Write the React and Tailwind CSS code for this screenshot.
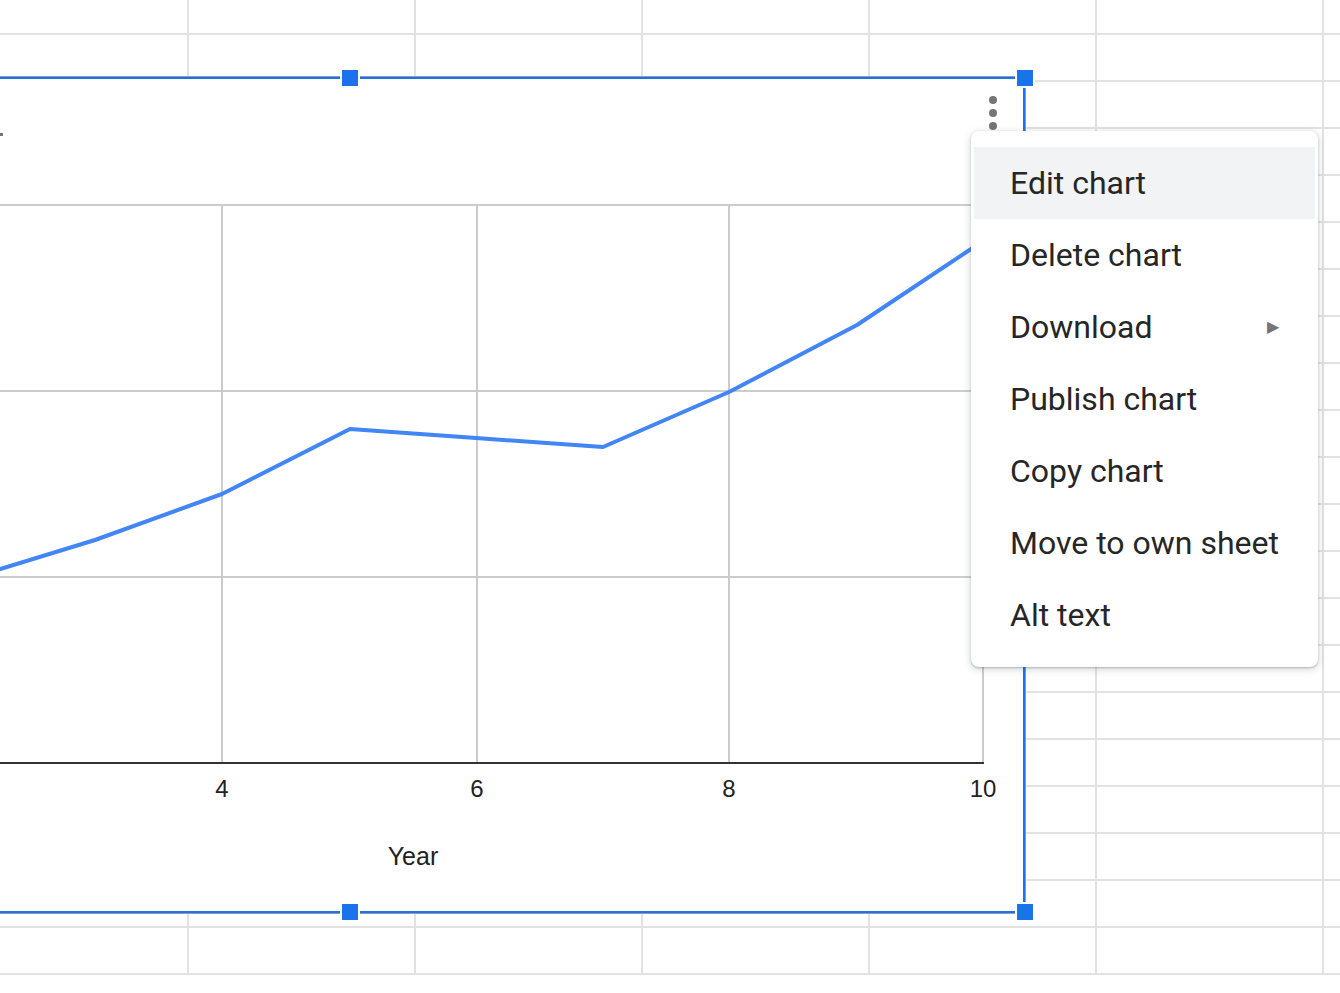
const ROWS = 21;
const COLS = 7;

const MENU_ITEMS = [
  "Edit chart",
  "Delete chart",
  "Download",
  "Publish chart",
  "Copy chart",
  "Move to own sheet",
  "Alt text",
];

// year -> y pixel, page coordinates
const POINTS = [
  [-32, 579],
  [95, 540],
  [222, 494],
  [350, 429],
  [476, 438],
  [603, 447],
  [729, 392],
  [857, 325],
  [983, 241],
];

const SheetGrid = () => {
  const rows = [];
  for (let r = 0; r < ROWS; r++) {
    const cells = [];
    for (let c = 0; c < COLS; c++) {
      cells.push(
        <div
          key={c}
          className={
            "shrink-0 h-full border-r-2 border-b-2 border-[#e2e2e2] " +
            (c === 0 ? "w-[189px]" : "w-[227px]")
          }
        />
      );
    }
    rows.push(
      <div key={r} className={"flex " + (r === 0 ? "h-[35px]" : "h-[47px]")}>
        {cells}
      </div>
    );
  }
  return <div className="flex flex-col">{rows}</div>;
};

const Handle = ({ className }) => (
  <div
    className={
      "absolute w-[20px] h-[20px] bg-[#1a73e8] border-2 border-white " + className
    }
  />
);

const Chart = () => {
  const line = POINTS.map((p) => p.join(",")).join(" ");
  return (
    <div className="absolute left-[-325px] top-[77px] w-[1350px] h-[836px] bg-white border-2 border-[#1a73e8] shadow-[0_0_0_1px_#8e9aaf]">
      <svg
        className="absolute inset-0"
        width="1346"
        height="832"
        viewBox="-323 79 1346 832"
      >
        <g stroke="#cccccc" strokeWidth="2">
          <line x1="-286" y1="205" x2="983" y2="205" />
          <line x1="-286" y1="391" x2="983" y2="391" />
          <line x1="-286" y1="577" x2="983" y2="577" />
          <line x1="222" y1="205" x2="222" y2="763" />
          <line x1="477" y1="205" x2="477" y2="763" />
          <line x1="729" y1="205" x2="729" y2="763" />
          <line x1="983" y1="205" x2="983" y2="763" />
        </g>
        <line x1="-286" y1="763" x2="984" y2="763" stroke="#333333" strokeWidth="2" />
        <polyline
          points={line}
          fill="none"
          stroke="#4285f4"
          strokeWidth="4"
          strokeLinejoin="round"
        />
        <g
          fill="#222222"
          fontFamily="'Liberation Sans', Arial, sans-serif"
          textAnchor="middle"
        >
          <text x="222" y="797" fontSize="24">4</text>
          <text x="477" y="797" fontSize="24">6</text>
          <text x="729" y="797" fontSize="24">8</text>
          <text x="983" y="797" fontSize="24">10</text>
          <text x="413" y="865" fontSize="25">Year</text>
        </g>
        <rect x="0" y="133" width="3" height="3" fill="#757575" />
      </svg>
      <div className="absolute right-[26px] top-[17px] flex flex-col gap-[5px]">
        <div className="w-[8px] h-[8px] rounded-full bg-[#757575]" />
        <div className="w-[8px] h-[8px] rounded-full bg-[#757575]" />
        <div className="w-[8px] h-[8px] rounded-full bg-[#757575]" />
      </div>
    </div>
  );
};

const ChartMenu = () => (
  <div className="absolute left-[971px] top-[131px] w-[347px] bg-white rounded-lg px-[3px] py-4 shadow-[0_2px_6px_2px_rgba(60,64,67,0.15),0_1px_2px_0_rgba(60,64,67,0.3)] font-['Roboto',sans-serif] text-[32px] text-[#262626]">
    {MENU_ITEMS.map((item, i) => (
      <div
        key={item}
        className={
          "h-[72px] flex items-center justify-between pl-[36px] pr-[36px] " +
          (i === 0 ? "bg-[#f1f3f4]" : "")
        }
      >
        <span>{item}</span>
        {item === "Download" && (
          <span className="text-[16px] text-[#757575]">▶</span>
        )}
      </div>
    ))}
  </div>
);

const App = () => {
  return (
    <div className="relative w-[1340px] h-[993px] overflow-hidden bg-white">
      <SheetGrid />
      <Chart />
      <Handle className="left-[340px] top-[68px]" />
      <Handle className="left-[1015px] top-[68px]" />
      <Handle className="left-[340px] top-[902px]" />
      <Handle className="left-[1015px] top-[902px]" />
      <ChartMenu />
    </div>
  );
};

export default App;
